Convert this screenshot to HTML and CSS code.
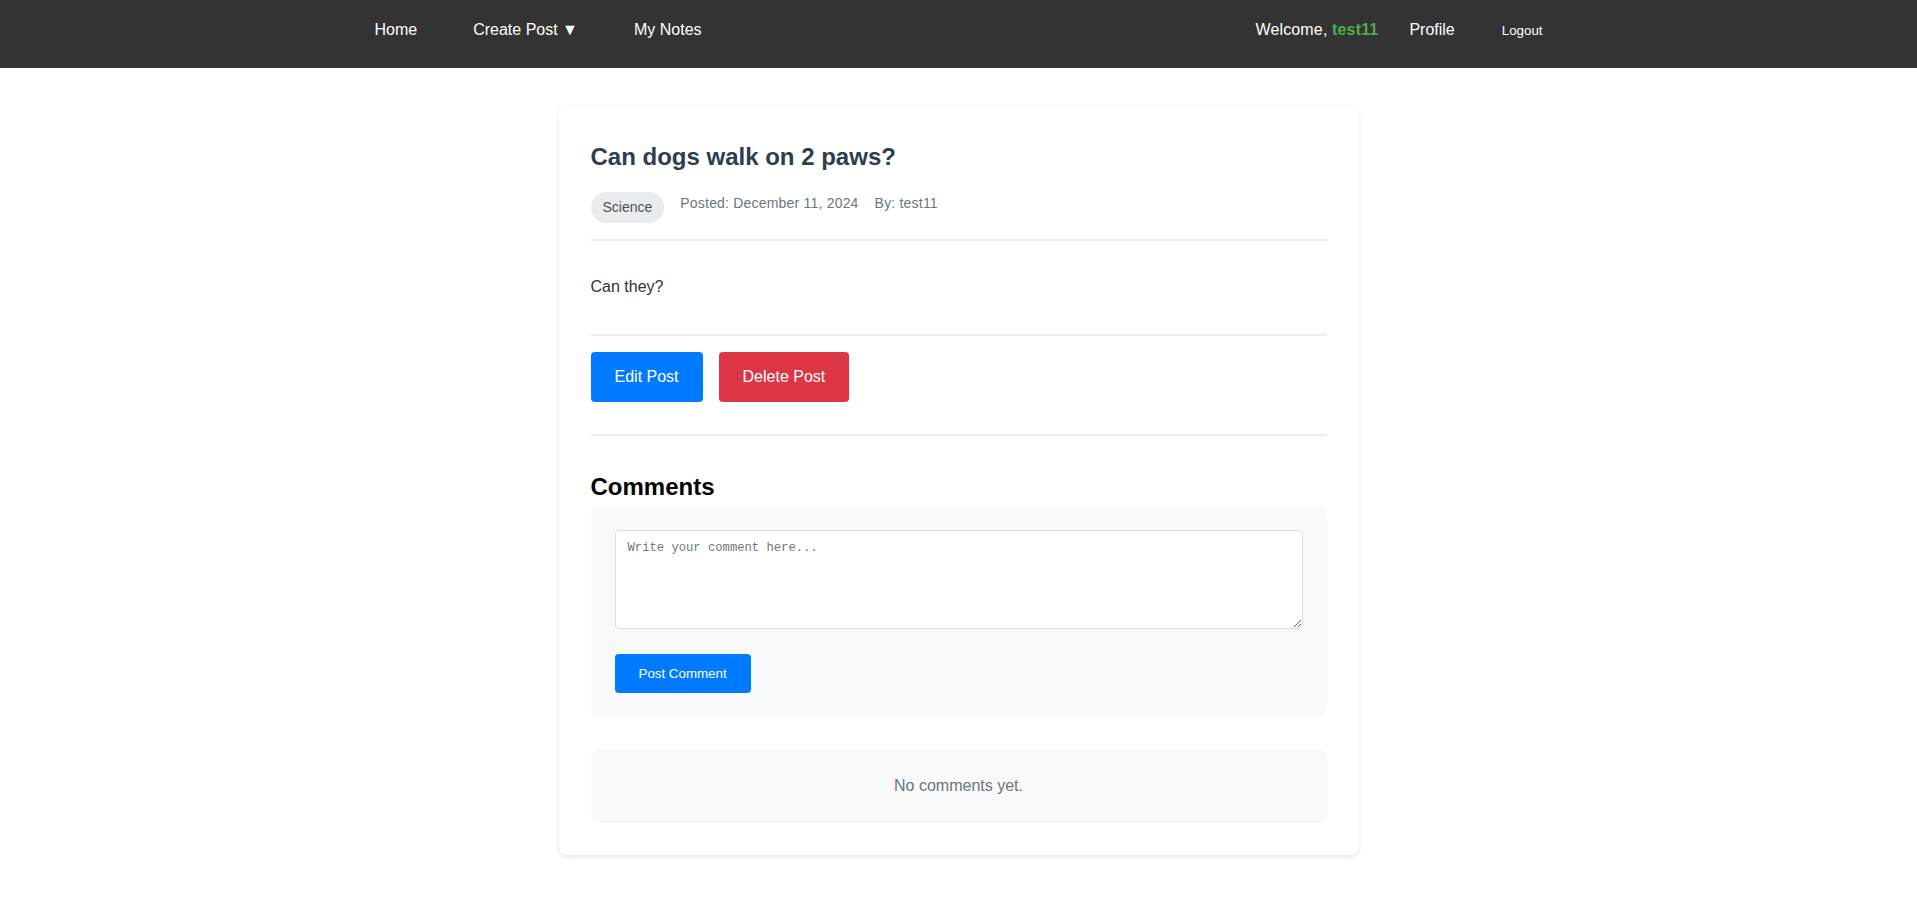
FILE: index.html
```html
<!DOCTYPE html>
<html lang="en">
<head>
<meta charset="utf-8">
<title>Can dogs walk on 2 paws?</title>
<link rel="stylesheet" href="styles.css">
</head>
<body>
<nav class="navbar">
  <div class="nav-inner">
    <div class="nav-left">
      <a class="nav-link" href="#">Home</a>
      <a class="nav-link" href="#">Create Post ▼</a>
      <a class="nav-link" href="#">My Notes</a>
    </div>
    <div class="nav-right">
      <span class="welcome">Welcome, <strong class="username">test11</strong></span>
      <a class="nav-link" href="#">Profile</a>
      <button class="logout-btn" type="button">Logout</button>
    </div>
  </div>
</nav>

<main class="post-card">
  <header class="post-header">
    <h1 class="post-title">Can dogs walk on 2 paws?</h1>
    <div class="post-meta">
      <span class="tag">Science</span>
      <span class="meta-item">Posted: December 11, 2024</span>
      <span class="meta-item">By: test11</span>
    </div>
  </header>

  <div class="post-content">
    <p>Can they?</p>
  </div>

  <div class="post-actions">
    <button class="btn btn-primary" type="button">Edit Post</button>
    <button class="btn btn-danger" type="button">Delete Post</button>
  </div>

  <section class="comments">
    <h2 class="comments-title">Comments</h2>
    <form class="comment-form">
      <textarea class="comment-input" placeholder="Write your comment here..."></textarea>
      <button class="btn-small" type="button">Post Comment</button>
    </form>
    <div class="no-comments">No comments yet.</div>
  </section>
</main>
</body>
</html>
```

FILE: styles.css
```css
* {
  box-sizing: border-box;
}

body {
  margin: 0;
  font-family: "Liberation Sans", Arial, sans-serif;
  line-height: 1.6;
  color: #333;
  background: #fff;
}

/* Navbar */
.navbar {
  background: #333333;
  height: 68px;
  padding-bottom: 8px;
}

.nav-inner {
  max-width: 1200px;
  height: 100%;
  margin: 0 auto;
  display: flex;
  justify-content: space-between;
  align-items: center;
}

.nav-left {
  display: flex;
  align-items: center;
  gap: 24px;
}

.nav-right {
  display: flex;
  align-items: center;
  gap: 15px;
}

.nav-link {
  color: #fff;
  text-decoration: none;
  font-size: 16px;
  line-height: 1.2;
  padding: 0 16px;
}

.welcome {
  color: #fff;
  font-size: 16px;
  line-height: 1.2;
  letter-spacing: 0.15px;
}

.username {
  color: #4caf50;
  font-weight: bold;
}

.logout-btn {
  background: transparent;
  border: none;
  color: #fff;
  font-family: "Liberation Sans", Arial, sans-serif;
  font-size: 13.333px;
  padding: 0 16px;
  cursor: pointer;
}

/* Card */
.post-card {
  max-width: 800px;
  margin: 38px auto 40px;
  background: #fff;
  border-radius: 8px;
  padding: 32px;
  box-shadow: 0 2px 5px rgba(0, 0, 0, 0.1);
}

.post-header {
  padding-bottom: 16px;
  border-bottom: 2px solid #eee;
}

.post-title {
  margin: 0 0 16px;
  font-size: 24px;
  color: #2c3e50;
}

.post-meta {
  display: flex;
  align-items: flex-start;
  gap: 16px;
  font-size: 14px;
}

.tag {
  background: #e9ecef;
  color: #495057;
  padding: 4px 12px;
  border-radius: 16px;
}

.meta-item {
  color: #6c757d;
  letter-spacing: 0.2px;
}

.post-content {
  padding: 32px 0;
  line-height: 1.8;
  font-size: 16px;
  border-bottom: 2px solid #eee;
}

.post-content p {
  margin: 0;
}

.post-actions {
  display: flex;
  gap: 16px;
  padding: 16px 0 32px;
  border-bottom: 2px solid #eee;
}

.btn {
  font-family: "Liberation Sans", Arial, sans-serif;
  font-size: 16px;
  color: #fff;
  border: none;
  border-radius: 4px;
  padding: 16px 24px;
  cursor: pointer;
}

.btn-primary {
  background: #007bff;
}

.btn-danger {
  background: #dc3545;
}

/* Comments */
.comments {
  padding-top: 32px;
}

.comments-title {
  margin: 0;
  font-size: 24px;
  color: #000;
}

.comment-form {
  background: #f8f9fa;
  border-radius: 8px;
  padding: 24px;
}

.comment-input {
  display: block;
  width: 100%;
  height: 99px;
  padding: 10px 12px;
  border: 1px solid #ddd;
  border-radius: 4px;
  font-family: "Liberation Mono", monospace;
  font-size: 12.2px;
  margin: 0 0 25px;
  background: #fff;
}

.comment-input::placeholder {
  color: #757575;
}

.btn-small {
  font-family: "Liberation Sans", Arial, sans-serif;
  font-size: 13.333px;
  color: #fff;
  background: #007bff;
  border: none;
  border-radius: 4px;
  padding: 12px 24px;
  cursor: pointer;
}

.no-comments {
  margin-top: 32px;
  background: #f8f9fa;
  border-radius: 8px;
  padding: 24px;
  text-align: center;
  color: #6c757d;
  font-size: 16px;
}
```
